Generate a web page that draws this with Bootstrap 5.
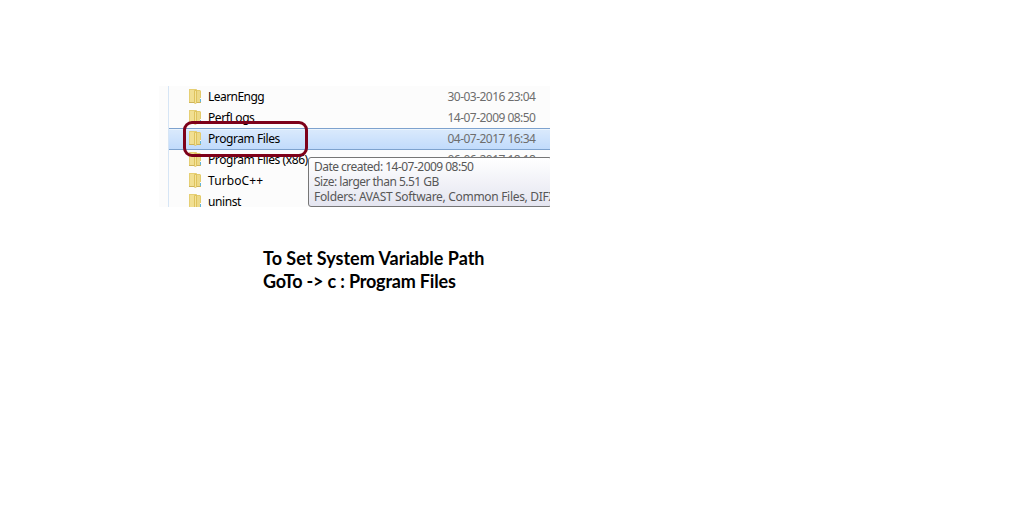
<!DOCTYPE html>
<html lang="en">
<head>
<meta charset="utf-8">
<meta name="viewport" content="width=device-width, initial-scale=1">
<title>Program Files</title>
<link href="https://cdn.jsdelivr.net/npm/bootstrap@5.3.0/dist/css/bootstrap.min.css" rel="stylesheet">
<style>
body{background:#fff;font-family:"Noto Sans",sans-serif;color:#000}
.page{padding:86px 0 0 159px}
.explorer{width:391px;height:121px;background:#fcfcfc;font-size:12px;line-height:21px}
.tree-edge{width:10px;border-right:1px solid #d6e5f5}
.file-row{height:21px;padding-left:19px;white-space:nowrap}
.file-row svg{width:14px;height:17px;margin:2px 6px 0 0}
.file-name{width:239.5px;letter-spacing:-.42px}
.tight{letter-spacing:-.55px}
.airy{letter-spacing:.1px}
.file-date{color:#6d6d6d;letter-spacing:-.53px}
.chosen{background:linear-gradient(#dcebfc,#c1dbfc);box-shadow:inset 0 1px #7da2ce,0 1px #7da2ce,inset 0 2px #ebf4fd}
.ring{left:24px;top:35px;width:125px;height:36px;border:3px solid #7d0019;border-radius:9px}
.tip{left:149px;top:71px;width:244px;height:50px;padding:1px 5px;border:1px solid #767676;border-radius:3px;background:linear-gradient(#fff,#e4e5f0);color:#575757;line-height:15px;letter-spacing:-.52px;white-space:nowrap}
.tip-folders{letter-spacing:-.31px}
.caption-text{margin:40px 0 0 104px;font:bold 18px/23px Lato,sans-serif;white-space:nowrap}
.goto-line{letter-spacing:-.18px}
</style>
</head>
<body>
<svg class="d-none">
<symbol id="folder" viewBox="0 0 14 17">
<path d="M8 2h4l1 1v12H8z" fill="#e3cb6c"/>
<path d="M9 3h3v11H9z" fill="#ecd988"/>
<path d="M12 10h1v1h-1z" fill="#f8fbfb"/><path d="M12 11h1v3h-1z" fill="#62b4d8"/>
<path d="M1 1h7v14H1z" fill="#e6cf74"/>
<path d="M2 2h4v12H2z" fill="#f1df92"/>
<path d="M6 3l3-2v14l-2 1-1-1z" fill="#dfc35e"/>
<path d="M7 3h1v12H7z" fill="#f4e49c"/>
<path d="M1 14h5v1H1zM9 14h4v1H9z" fill="#cfb55b"/>
</symbol>
</svg>
<main class="page">
<section class="explorer d-flex position-relative overflow-hidden">
<div class="tree-edge flex-shrink-0"></div>
<div class="flex-grow-1">
<div class="file-row d-flex"><svg><use href="#folder"/></svg><span class="file-name tight">LearnEngg</span><span class="file-date">30-03-2016 23:04</span></div>
<div class="file-row d-flex"><svg><use href="#folder"/></svg><span class="file-name">PerfLogs</span><span class="file-date">14-07-2009 08:50</span></div>
<div class="file-row d-flex chosen"><svg><use href="#folder"/></svg><span class="file-name">Program Files</span><span class="file-date">04-07-2017 16:34</span></div>
<div class="file-row d-flex"><svg><use href="#folder"/></svg><span class="file-name">Program Files (x86)</span><span class="file-date">06-06-2017 18:18</span></div>
<div class="file-row d-flex"><svg><use href="#folder"/></svg><span class="file-name airy">TurboC++</span></div>
<div class="file-row d-flex"><svg><use href="#folder"/></svg><span class="file-name">uninst</span></div>
</div>
<div class="ring position-absolute"></div>
<div class="tip position-absolute"><div>Date created: 14-07-2009 08:50</div><div>Size: larger than 5.51 GB</div><div class="tip-folders">Folders: AVAST Software, Common Files, DIFX</div></div>
</section>
<div class="caption-text"><div>To Set System Variable Path</div><div class="goto-line">GoTo -&gt; c : Program Files</div></div>
</main>
<script src="https://cdn.jsdelivr.net/npm/bootstrap@5.3.0/dist/js/bootstrap.bundle.min.js"></script>
</body>
</html>
